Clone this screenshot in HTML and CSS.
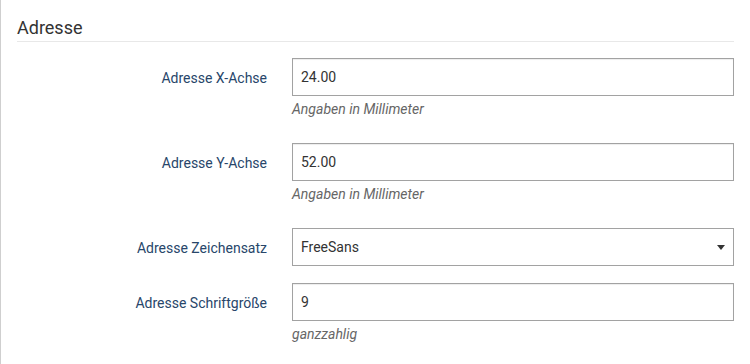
FILE: index.html
```html
<!DOCTYPE html>
<html lang="de">
<head>
<meta charset="utf-8">
<title>Adresse</title>
<link rel="stylesheet" href="styles.css">
</head>
<body>
<div class="panel">
  <div class="legend">Adresse</div>
  <form class="form">
    <div class="row">
      <label class="label" for="ax">Adresse X-Achse</label>
      <div class="field">
        <input class="control" id="ax" type="text" value="24.00">
        <div class="help">Angaben in Millimeter</div>
      </div>
    </div>
    <div class="row">
      <label class="label" for="ay">Adresse Y-Achse</label>
      <div class="field">
        <input class="control" id="ay" type="text" value="52.00">
        <div class="help">Angaben in Millimeter</div>
      </div>
    </div>
    <div class="row">
      <label class="label" for="az">Adresse Zeichensatz</label>
      <div class="field">
        <div class="select-wrap">
          <select class="control select" id="az">
            <option>FreeSans</option>
          </select>
        </div>
      </div>
    </div>
    <div class="row">
      <label class="label" for="as">Adresse Schriftgröße</label>
      <div class="field">
        <input class="control" id="as" type="text" value="9">
        <div class="help">ganzzahlig</div>
      </div>
    </div>
  </form>
</div>
</body>
</html>
```

FILE: styles.css
```css
html, body {
  margin: 0;
  padding: 0;
  background: #fff;
}
body {
  font-family: Roboto, "Liberation Sans", sans-serif;
  font-size: 14px;
  color: #333;
}
.panel {
  border-left: 1px solid #cfcfcf;
  height: 364px;
  box-sizing: border-box;
  padding: 0 16px 0 16px;
}
.legend {
  font-size: 18px;
  line-height: 21px;
  color: #333;
  padding-top: 17px;
  padding-bottom: 3px;
  border-bottom: 1px solid #e8e8e8;
  margin-bottom: 16px;
}
.form {
  margin: 0;
}
.row {
  display: grid;
  grid-template-columns: 250px 1fr;
  column-gap: 25px;
  margin-bottom: 17px;
}
.label {
  text-align: right;
  color: #28466a;
  font-size: 14px;
  line-height: 20px;
  padding-top: 10px;
}
.control {
  display: block;
  width: 100%;
  height: 38px;
  box-sizing: border-box;
  border: 1px solid #a2a2a2;
  border-radius: 0;
  padding: 0 8px;
  font-family: Roboto, "Liberation Sans", sans-serif;
  font-size: 14px;
  color: #333;
  background: #fff;
  box-shadow: inset 0 1px 1px rgba(0, 0, 0, 0.075);
  outline: none;
  margin: 0;
}
.select-wrap {
  position: relative;
}
.select {
  appearance: none;
  -webkit-appearance: none;
  box-shadow: none;
}
.select-wrap::after {
  content: "";
  position: absolute;
  right: 9px;
  top: 17px;
  width: 0;
  height: 0;
  border-left: 4px solid transparent;
  border-right: 4px solid transparent;
  border-top: 5px solid #333;
  pointer-events: none;
}
.help {
  font-style: italic;
  color: #666;
  font-size: 14px;
  line-height: 20px;
  margin-top: 3px;
  margin-bottom: 7px;
}
```
